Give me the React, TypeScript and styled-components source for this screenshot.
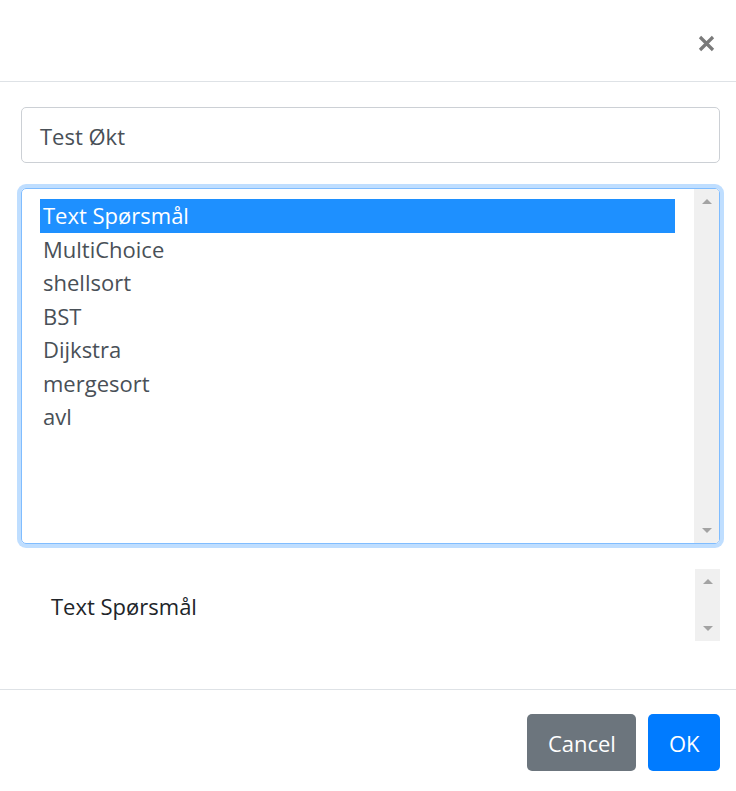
import React from "react";
import styled, { createGlobalStyle } from "styled-components";

const Global = createGlobalStyle`
  html, body { margin: 0; padding: 0; background: #fff; }
  body { font-family: "Open Sans", "Noto Sans", sans-serif; color: #212529; }
`;

const Modal = styled.div`
  width: 736px;
  display: flex;
  flex-direction: column;
`;

const Header = styled.div`
  height: 81px;
  border-bottom: 1px solid #dee2e6;
  display: flex;
  align-items: center;
  justify-content: flex-end;
  padding: 0 21px;
  box-sizing: content-box;
`;

const Close = styled.button`
  border: 0;
  background: transparent;
  padding: 0;
  width: 18px;
  height: 18px;
  margin-top: 6px;
  cursor: pointer;
  display: flex;
  align-items: center;
  justify-content: center;
`;

const Body = styled.div`
  padding: 25px 16px 48px 21px;
  display: flex;
  flex-direction: column;
  gap: 25px;
`;

const TextInput = styled.div`
  border: 1px solid #ccd0d5;
  border-radius: 5px;
  padding: 2px 18px 0;
  box-sizing: content-box;
  height: 52px;
  display: flex;
  align-items: center;
  font-size: 22px;
  color: #495057;
`;

const ListBox = styled.div`
  height: 354px;
  border: 1px solid #80bdff;
  border-radius: 5px;
  box-shadow: 0 0 0 4px rgba(0, 123, 255, 0.25);
  display: flex;
  overflow: hidden;
`;

const Options = styled.div`
  flex: 1;
  padding: 10px 19px 0 18px;
  display: flex;
  flex-direction: column;
`;

const Option = styled.div<{ $selected?: boolean }>`
  height: 33.5px;
  line-height: 33px;
  padding-left: 3px;
  font-size: 22px;
  color: ${(p) => (p.$selected ? "#fff" : "#495057")};
  background: ${(p) => (p.$selected ? "#1e90ff" : "transparent")};
`;

const Scrollbar = styled.div<{ $h?: number }>`
  width: 25px;
  background: #f0f0f0;
  display: flex;
  flex-direction: column;
  justify-content: space-between;
  align-items: center;
  padding: 10px 0;
  box-sizing: border-box;
  ${(p) => (p.$h ? `height: ${p.$h}px;` : "")}
`;

const Arrow = styled.div<{ $down?: boolean }>`
  width: 0;
  height: 0;
  border-left: 5px solid transparent;
  border-right: 5px solid transparent;
  ${(p) =>
    p.$down ? "border-top: 5px solid #a3a3a3;" : "border-bottom: 5px solid #a3a3a3;"}
`;

const Preview = styled.div`
  height: 72px;
  display: flex;
`;

const PreviewText = styled.div`
  flex: 1;
  padding: 22px 0 0 30px;
  font-size: 22px;
  color: #212529;
`;

const Footer = styled.div`
  border-top: 1px solid #dee2e6;
  padding: 24px 16px 20px;
  display: flex;
  justify-content: flex-end;
  gap: 12px;
`;

const Button = styled.button<{ $variant: "secondary" | "primary" }>`
  height: 57px;
  padding: 0 20.5px;
  border: 0;
  border-radius: 5px;
  font-family: inherit;
  font-size: 22px;
  color: #fff;
  background: ${(p) => (p.$variant === "primary" ? "#007bff" : "#6c757d")};
`;

const items = ["Text Spørsmål", "MultiChoice", "shellsort", "BST", "Dijkstra", "mergesort", "avl"];

export default function App() {
  return (
    <>
      <Global />
      <Modal>
        <Header>
          <Close aria-label="Close">
            <svg width="17" height="17" viewBox="0 0 17 17">
              <path d="M2 2 L15 15 M15 2 L2 15" stroke="#7a7a7a" strokeWidth="3.2" strokeLinecap="butt" />
            </svg>
          </Close>
        </Header>
        <Body>
          <TextInput>Test Økt</TextInput>
          <ListBox>
            <Options>
              {items.map((it, i) => (
                <Option key={it} $selected={i === 0}>
                  {it}
                </Option>
              ))}
            </Options>
            <Scrollbar>
              <Arrow />
              <Arrow $down />
            </Scrollbar>
          </ListBox>
          <Preview>
            <PreviewText>Text Spørsmål</PreviewText>
            <Scrollbar $h={72}>
              <Arrow />
              <Arrow $down />
            </Scrollbar>
          </Preview>
        </Body>
        <Footer>
          <Button $variant="secondary">Cancel</Button>
          <Button $variant="primary">OK</Button>
        </Footer>
      </Modal>
    </>
  );
}
